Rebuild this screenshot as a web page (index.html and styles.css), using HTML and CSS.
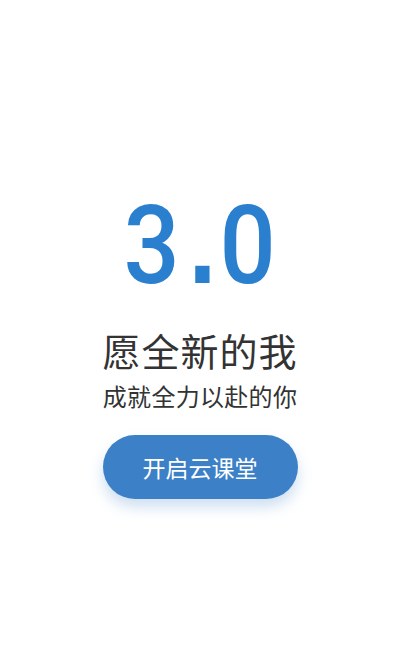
FILE: index.html
```html
<!DOCTYPE html>
<html lang="zh">
<head>
<meta charset="utf-8">
<link rel="stylesheet" href="styles.css">
</head>
<body>
<main class="page">
  <div class="version">3<span class="dot">.</span>0</div>
  <h1 class="title">愿全新的我</h1>
  <p class="subtitle">成就全力以赴的你</p>
  <button class="start">开启云课堂</button>
</main>
</body>
</html>
```
FILE: styles.css
```css
html, body {
  margin: 0;
  padding: 0;
  background: #ffffff;
}
.page {
  width: 400px;
  height: 650px;
  display: flex;
  flex-direction: column;
  align-items: center;
  font-family: "Noto Sans CJK SC", "Noto Sans", sans-serif;
}
.version {
  margin-top: 188px;
  height: 116px;
  font-family: "Roboto", "DejaVu Sans", sans-serif;
  font-size: 110px;
  line-height: 116px;
  font-weight: 500;
  color: #2a80cf;
  transform: scaleX(0.9);
}
.dot {
  font-family: "DejaVu Sans", sans-serif;
  font-weight: 700;
  font-size: 90px;
  line-height: 0;
  padding: 0 2px 0 8px;
}
.title {
  margin: 21px 0 0;
  font-size: 38px;
  line-height: 50px;
  font-weight: 400;
  color: #333333;
  letter-spacing: 1px;
}
.subtitle {
  margin: 4px 0 0;
  font-size: 24px;
  line-height: 34px;
  color: #333333;
  letter-spacing: 0.3px;
}
.start {
  margin-top: 22px;
  width: 195px;
  height: 64px;
  border: none;
  border-radius: 32px;
  background: #3c80c8;
  color: #ffffff;
  font-family: "Noto Sans CJK SC", sans-serif;
  font-size: 23px;
  box-shadow: 0 8px 14px rgba(60, 128, 200, 0.25);
  padding: 0;
}
```
